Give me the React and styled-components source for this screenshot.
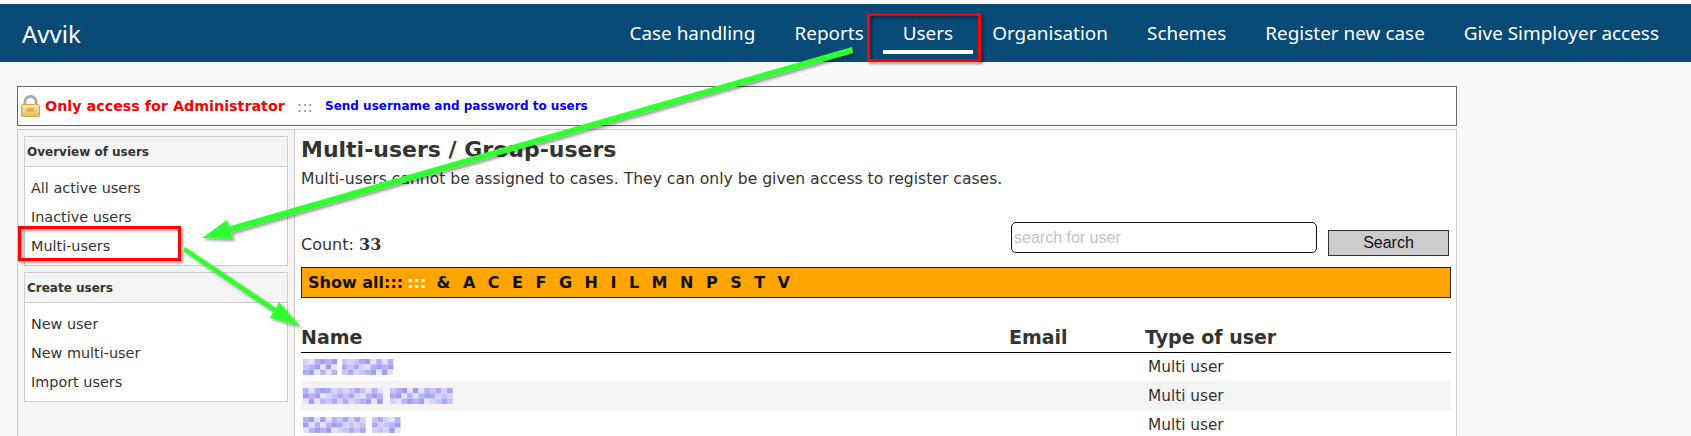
import React from 'react'
import styled, { createGlobalStyle } from 'styled-components'

const GlobalStyle = createGlobalStyle`
  html, body {
    margin: 0;
    height: 436px;
    overflow: hidden;
    background: #f9f9f9;
  }
  * { box-sizing: border-box; }
`

const bodyFont = `"DejaVu Sans", Verdana, sans-serif`

const Page = styled.div`
  position: relative;
  width: 1691px;
  height: 436px;
  overflow: hidden;
  padding-top: 4px;
  background: #f9f9f9;
  font-family: ${bodyFont};
  color: #333;
`

const TopBar = styled.header`
  height: 58px;
  background: #074a75;
  display: flex;
  align-items: center;
  justify-content: space-between;
  padding: 0 32px 0 22px;
  font-family: "Noto Sans", sans-serif;
  color: #fff;
`

const Brand = styled.div`
  font-size: 24px;
`

const Nav = styled.nav`
  display: flex;
  gap: 39px;
  font-size: 18.900px;
  letter-spacing: 0.02px;
`

const NavItem = styled.a`
  position: relative;
  color: #fff;

  ${props => props.$active && `
    &::after {
      content: '';
      position: absolute;
      left: -20px;
      right: -20px;
      bottom: -8px;
      height: 4px;
      background: #fff;
    }
  `}
`

const Notice = styled.div`
  width: 1440px;
  height: 40px;
  margin: 24px 0 3px 17px;
  display: flex;
  align-items: center;
  padding-left: 3px;
  background: #fff;
  border: 1px solid #666;
`

const Restricted = styled.b`
  margin-left: 5px;
  font-size: 14.300px;
  color: #f00;
`

const Dots = styled.span`
  margin: ${props => props.$margin || '0 12px'};
  font-size: 16px;
  color: ${props => props.$color || '#999'};
`

const NoticeLink = styled.a`
  font-size: 12px;
  font-weight: bold;
  color: #00f;
`

const Wrapper = styled.div`
  width: 1440px;
  height: 320px;
  margin-left: 17px;
  display: flex;
  background: #fff;
  border: 1px solid #ccc;
`

const Sidebar = styled.aside`
  width: 277px;
  flex: none;
  display: flex;
  flex-direction: column;
  gap: 6px;
  padding: 6px 6px 0 6px;
  background: #f4f4f4;
  border-right: 1px solid #ccc;
`

const Panel = styled.section`
  background: #fff;
  border: 1px solid #ccc;
`

const PanelTitle = styled.h3`
  height: 30px;
  margin: 0;
  padding-left: 2px;
  display: flex;
  align-items: center;
  font-size: 12px;
  font-weight: bold;
  background: #f4f4f4;
  border-bottom: 1px solid #ccc;
`

const PanelList = styled.div`
  padding: 6px 0 5px 6px;
`

const PanelItem = styled.a`
  display: flex;
  align-items: center;
  height: 29px;
  font-size: 14.400px;
  color: #333;
`

const Main = styled.main`
  flex: 1;
  padding: 7px 5px 0 6px;
`

const Title = styled.h1`
  margin: 0;
  font-size: 22px;
  line-height: 26px;
  font-weight: bold;
`

const Description = styled.p`
  margin: 6px 0 0;
  font-size: 15.600px;
  line-height: 20px;
`

const Toolbar = styled.div`
  height: 38px;
  margin-top: 29px;
  display: flex;
  align-items: flex-end;
  font-size: 16px;
`

const Count = styled.div`
  flex: 1;
  padding-bottom: 2px;
  b { font-family: "DejaVu Serif", serif; }
`

const SearchInput = styled.input`
  width: 306px;
  height: 31px;
  margin: 0 11px 3px 0;
  padding: 0 2px;
  font: 16px "Liberation Sans", Arial, sans-serif;
  background: #fff;
  border: 1px solid #111;
  border-radius: 5px;
  &::placeholder { color: #c4c4c4; opacity: 1; }
`

const SearchButton = styled.button`
  width: 121px;
  height: 26px;
  margin-right: 2px;
  padding: 0;
  font: 16px "Liberation Sans", Arial, sans-serif;
  color: #111;
  background: #ccc;
  border: 1px solid #333;
`

const LetterBar = styled.div`
  height: 31px;
  margin: 11px 0 0;
  display: flex;
  align-items: center;
  padding-left: 6px;
  font-size: 16px;
  font-weight: bold;
  color: #111;
  background: #ffa500;
  border: 1px solid #222;
`

const Letters = styled.div`
  display: flex;
  gap: 12.500px;
`

const UserTable = styled.table`
  width: 100%;
  margin-top: 25px;
  table-layout: fixed;
  border-collapse: collapse;
`

const HeadCell = styled.th`
  width: ${props => props.$width || 'auto'};
  height: 29px;
  padding: 0;
  text-align: left;
  font-size: 19px;
  border-bottom: 1px solid #000;
`

const Row = styled.tr`
  height: 29px;
  background: ${props => props.$striped ? '#f4f4f4' : 'transparent'};
`

const Cell = styled.td`
  padding: ${props => props.$pad || '0'};
  font-size: 15.300px;
  vertical-align: middle;

  svg { display: block; }
`

// things drawn on top of the screenshot afterwards
const Annotations = styled.svg`
  position: absolute;
  left: 0;
  top: 0;
  pointer-events: none;
`

const LockIcon = () => (
  <svg width="19" height="22" viewBox="0 0 19 22">
    <defs>
      <linearGradient id="lockBody" x1="0" y1="0" x2="0" y2="1">
        <stop offset="0" stopColor="#fbe7a6" />
        <stop offset="1" stopColor="#e8b95c" />
      </linearGradient>
    </defs>
    <path d="M4 10V7a5.500 5.500 0 0 1 11 0v3" fill="none" stroke="#a9a9a9" strokeWidth="3" />
    <rect x="0.500" y="9.500" width="18" height="12" rx="1.500" fill="url(#lockBody)" stroke="#d9a441" />
    <rect x="6" y="13" width="7" height="4" fill="#c9973f" opacity="0.6" />
  </svg>
)

// pixelated names, the original screenshot has them masked
const mosaicColors = ['#b6b2f9', '#d5d2fc', '#a09df6', '#c6c3fa', '#e4e2fd', '#aaa8f8']

const Mosaic = ({ words, seed }) => {
  const cell = 5.7
  const rects = []
  let x = 0
  words.forEach((w, wi) => {
    const cols = Math.round(w / cell)
    for (let c = 0; c < cols; c++) {
      for (let r = 0; r < 3; r++) {
        const n = (c * 7 + r * 13 + wi * 5 + seed) * 2654435761 >>> 0
        rects.push(
          <rect key={`${wi}-${c}-${r}`} x={x + c * cell} y={r * 5.3} width={cell} height={5.3}
            fill={mosaicColors[(n >>> 8) % mosaicColors.length]} />
        )
      }
    }
    x += w + 5
  })
  return <svg width={x} height={16}>{rects}</svg>
}

const letters = ['&', 'A', 'C', 'E', 'F', 'G', 'H', 'I', 'L', 'M', 'N', 'P', 'S', 'T', 'V']
const navItems = ['Case handling', 'Reports', 'Users', 'Organisation', 'Schemes', 'Register new case', 'Give Simployer access']
const rows = [
  { words: [34, 50], seed: 3 },
  { words: [82, 60], seed: 11 },
  { words: [64, 30], seed: 23 },
]

const App = () => {
  return (
    <Page>
      <GlobalStyle />
      <TopBar>
        <Brand>Avvik</Brand>
        <Nav>
          {navItems.map(item => (
            <NavItem key={item} $active={item === 'Users'}>{item}</NavItem>
          ))}
        </Nav>
      </TopBar>

      <Notice>
        <LockIcon />
        <Restricted>Only access for Administrator</Restricted>
        <Dots>:::</Dots>
        <NoticeLink>Send username and password to users</NoticeLink>
      </Notice>

      <Wrapper>
        <Sidebar>
          <Panel>
            <PanelTitle>Overview of users</PanelTitle>
            <PanelList>
              <PanelItem>All active users</PanelItem>
              <PanelItem>Inactive users</PanelItem>
              <PanelItem>Multi-users</PanelItem>
            </PanelList>
          </Panel>
          <Panel>
            <PanelTitle>Create users</PanelTitle>
            <PanelList>
              <PanelItem>New user</PanelItem>
              <PanelItem>New multi-user</PanelItem>
              <PanelItem>Import users</PanelItem>
            </PanelList>
          </Panel>
        </Sidebar>

        <Main>
          <Title>Multi-users / Group-users</Title>
          <Description>Multi-users cannot be assigned to cases. They can only be given access to register cases.</Description>

          <Toolbar>
            <Count>Count: <b>33</b></Count>
            <SearchInput placeholder="search for user" />
            <SearchButton>Search</SearchButton>
          </Toolbar>

          <LetterBar>
            Show all:::
            <Dots $color="#fff" $margin="0 10px 0 4px">:::</Dots>
            <Letters>
              {letters.map(l => <span key={l}>{l}</span>)}
            </Letters>
          </LetterBar>

          <UserTable>
            <thead>
              <tr>
                <HeadCell $width="708px">Name</HeadCell>
                <HeadCell $width="136px">Email</HeadCell>
                <HeadCell>Type of user</HeadCell>
              </tr>
            </thead>
            <tbody>
              {rows.map((row, i) => (
                <Row key={row.seed} $striped={i % 2 === 1}>
                  <Cell $pad="0 0 0 2px"><Mosaic words={row.words} seed={row.seed} /></Cell>
                  <Cell />
                  <Cell $pad="0 0 0 3px">Multi user</Cell>
                </Row>
              ))}
            </tbody>
          </UserTable>
        </Main>
      </Wrapper>

      <Annotations width="1691" height="436" viewBox="0 0 1691 436">
        <defs>
          <filter id="shadow" x="-5%" y="-5%" width="110%" height="110%">
            <feDropShadow dx="2" dy="2" stdDeviation="1.500" floodColor="#000" floodOpacity="0.4" />
          </filter>
        </defs>
        <g filter="url(#shadow)">
          <rect x="868.500" y="14.500" width="111" height="46" fill="none" stroke="#f00" strokeWidth="3" />
          <rect x="19.500" y="227.500" width="160" height="32" fill="none" stroke="#f00" strokeWidth="3" />
        </g>
        <g filter="url(#shadow)" fill="#33ff33">
          <polygon points="852,47 853,53 231,232.500 233,239 202,238 227,220 229,226.500" />
          <polygon points="185,247 276,308 279,302 300,326 270,318 273,312 183,251" />
        </g>
      </Annotations>
    </Page>
  )
}

export default App
